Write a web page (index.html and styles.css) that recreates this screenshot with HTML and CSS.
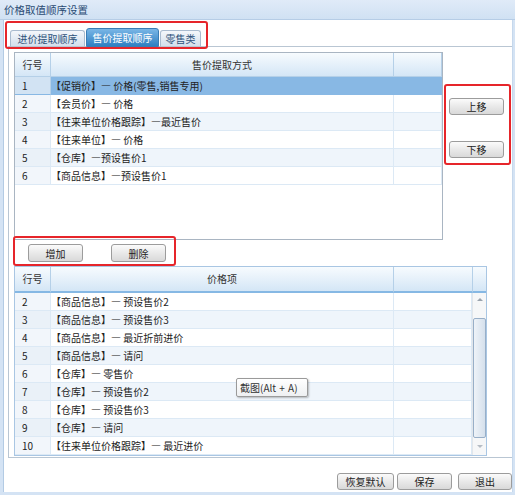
FILE: index.html
```html
<!DOCTYPE html>
<html lang="zh-CN">
<head>
<meta charset="utf-8">
<title>价格取值顺序设置</title>
<link rel="stylesheet" href="styles.css">
</head>
<body>
<div class="window">
  <div class="titlebar">价格取值顺序设置</div>
  <div class="content">
    <div class="tabs">
      <div class="tab t1">进价提取顺序</div>
      <div class="tab active">售价提取顺序</div>
      <div class="tab t3">零售类</div>
    </div>
    <div class="panel">
      <div class="upper">
        <div class="grid g1">
          <div class="hdr c3">
            <div>行号</div><div>售价提取方式</div><div></div>
          </div>
          <div class="row c3 sel"><div>1</div><div>【促销价】— 价格(零售,销售专用)</div><div></div></div>
          <div class="row c3"><div>2</div><div>【会员价】— 价格</div><div></div></div>
          <div class="row c3 alt"><div>3</div><div>【往来单位价格跟踪】—最近售价</div><div></div></div>
          <div class="row c3"><div>4</div><div>【往来单位】— 价格</div><div></div></div>
          <div class="row c3 alt"><div>5</div><div>【仓库】—预设售价1</div><div></div></div>
          <div class="row c3"><div>6</div><div>【商品信息】—预设售价1</div><div></div></div>
        </div>
        <div class="side">
          <button class="btn bside">上移</button>
          <button class="btn bside">下移</button>
        </div>
      </div>
      <div class="addrow">
        <button class="btn badd">增加</button>
        <button class="btn badd">删除</button>
      </div>
      <div class="grid g2">
        <div class="hdr c4">
          <div>行号</div><div>价格项</div><div></div><div></div>
        </div>
        <div class="gbody">
          <div class="rows">
            <div class="row c3l"><div>2</div><div>【商品信息】— 预设售价2</div><div></div></div>
            <div class="row c3l alt"><div>3</div><div>【商品信息】— 预设售价3</div><div></div></div>
            <div class="row c3l"><div>4</div><div>【商品信息】— 最近折前进价</div><div></div></div>
            <div class="row c3l alt"><div>5</div><div>【商品信息】— 请问</div><div></div></div>
            <div class="row c3l"><div>6</div><div>【仓库】— 零售价</div><div></div></div>
            <div class="row c3l alt"><div>7</div><div>【仓库】— 预设售价2</div><div></div></div>
            <div class="row c3l"><div>8</div><div>【仓库】— 预设售价3</div><div></div></div>
            <div class="row c3l alt"><div>9</div><div>【仓库】— 请问</div><div></div></div>
            <div class="row c3l"><div>10</div><div>【往来单位价格跟踪】— 最近进价</div><div></div></div>
          </div>
          <div class="sb">
            <div class="arr"><span class="up"></span></div>
            <div class="thumb"></div>
            <div class="arr down-area"><span class="down"></span></div>
          </div>
        </div>
      </div>
    </div>
    <div class="bottom">
      <button class="btn bb1">恢复默认</button>
      <button class="btn bb2">保存</button>
      <button class="btn bb3">退出</button>
    </div>
  </div>
  <div class="tooltip">截图(Alt + A)</div>
  <div class="mark m1"></div>
  <div class="mark m2"></div>
  <div class="mark m3"></div>
</div>
</body>
</html>
```
FILE: styles.css
```css
* { box-sizing: border-box; }
html, body { margin: 0; padding: 0; }
body {
  font-family: "Noto Sans CJK SC", "Noto Sans", sans-serif;
  font-size: 10px;
  color: #222;
  background: #d4e3f4;
}
.window {
  position: relative;
  width: 515px;
  height: 495px;
  overflow: hidden;
  display: flex;
  flex-direction: column;
  background: #d4e3f4;
}
.titlebar {
  height: 20px;
  line-height: 19px;
  padding-left: 4px;
  font-size: 10.5px;
  color: #2a4b73;
  background: linear-gradient(#e0ebf8, #d0e1f3);
  border-bottom: 1px solid #b6cde6;
}
.content {
  flex: 1;
  margin: 0 2px 3px 3px;
  background: #fff;
  border-left: 1px solid #b3cbe4;
  border-right: 1px solid #c6d8ec;
  display: flex;
  flex-direction: column;
}
.tabs {
  display: flex;
  align-items: flex-end;
  margin-top: 8px;
  padding-left: 6px;
  height: 19px;
  margin-bottom: -1px;
  position: relative;
  z-index: 1;
}
.tab {
  height: 17px;
  line-height: 16px;
  padding: 0;
  text-align: center;
  margin-right: 1px;
  color: #2d527a;
  background: linear-gradient(#f4f7fb, #d3dfec);
  border: 1px solid #a9bbcf;
  border-bottom-color: #b9c6d3;
  border-radius: 3px 3px 0 0;
  white-space: nowrap;
}
.t1 { width: 75px; }
.t3 { width: 41px; }
.tab.active {
  height: 19px;
  line-height: 18px;
  width: 73px;
  color: #fff;
  background: linear-gradient(#79b6e6, #2f80c2);
  border-color: #3a7db5;
}
.panel {
  margin-left: 4px;
  height: 412px;
  border: 1px solid #b9c6d3;
  border-right: none;
  padding: 5px 0 0 5px;
}
.upper { display: flex; }
.grid { background: #fff; }
.g1 {
  width: 429px;
  height: 188px;
  border: 1px solid #a9b5c2;
}
.hdr {
  display: grid;
  height: 24px;
}
.hdr > div {
  background: linear-gradient(#f7fbfe, #d4e6f6);
  border-right: 1px solid #b5d0e8;
  border-bottom: 1px solid #b5d0e8;
  text-align: center;
  line-height: 23px;
  color: #333;
}
.c3 { grid-template-columns: 36px 343px 1fr; }
.c4 { grid-template-columns: 36px 343px 79px 1fr; }
.c3l { grid-template-columns: 36px 343px 1fr; }
.row {
  display: grid;
  height: 18px;
}
.row > div {
  border-right: 1px solid #dce9f5;
  border-bottom: 1px solid #dce9f5;
  line-height: 17px;
  white-space: nowrap;
  overflow: hidden;
}
.row > div:first-child {
  padding-left: 7px;
  background: #f2f6fb;
}
.row > div:nth-child(2) { padding-left: 0; }
.row.alt > div { background: #eff5fb; }
.row.alt > div:first-child { background: #eaf1f8; }
.row.sel > div { background: #88b8e4; border-color: #88b8e4; }
.row.sel > div:first-child { background: #d2e3f3; border-right-color: #b5d0e8; }
.side {
  margin-left: 6px;
  padding-top: 46px;
  display: flex;
  flex-direction: column;
  gap: 26px;
}
.btn {
  font-family: inherit;
  font-size: 10px;
  color: #222;
  height: 17px;
  padding: 0;
  line-height: 15px;
  background: linear-gradient(#fbfbfb, #e9e9e9 50%, #d9d9d9);
  border: 1px solid #9c9c9c;
  border-radius: 3px;
}
.bside { width: 55px; }
.addrow {
  display: flex;
  gap: 28px;
  margin-top: 4px;
  padding-left: 14px;
}
.badd { width: 55px; height: 18px; }
.g2 {
  margin-top: 4px;
  width: 473px;
  height: 190px;
  border: 1px solid #a9c6e3;
  display: flex;
  flex-direction: column;
}
.g2 .hdr { height: 26px; }
.g2 .hdr > div {
  border-bottom: 2px solid #86b8e4;
  line-height: 24px;
}
.g2 .hdr > div:last-child { border-right: none; }
.gbody {
  flex: 1;
  display: flex;
}
.rows { flex: 1; }
.sb {
  width: 14px;
  background: #f6f7f8;
  border-left: 1px solid #e2e6ea;
  display: flex;
  flex-direction: column;
  align-items: center;
}
.arr {
  height: 13px;
  width: 100%;
  display: flex;
  align-items: center;
  justify-content: center;
}
.down-area { flex: 1; height: auto; }
.up, .down {
  width: 0;
  height: 0;
  border-left: 3px solid transparent;
  border-right: 3px solid transparent;
}
.up { border-bottom: 3px solid #9aa3ad; }
.down { border-top: 3px solid #b5bcc4; }
.thumb {
  margin-top: 12px;
  width: 13px;
  height: 120px;
  border: 1px solid #98afc8;
  border-radius: 2px;
  background: linear-gradient(to right, #eef3f8, #d5e0ec);
}
.bottom {
  display: flex;
  justify-content: flex-end;
  margin-top: 15px;
  gap: 3px;
}
.bb1 { width: 57px; }
.bb2 { width: 55px; margin-right: 3px; }
.bb3 { width: 54px; }
.tooltip {
  position: absolute;
  left: 236px;
  top: 378px;
  width: 72px;
  height: 19px;
  line-height: 17px;
  padding: 0 3px;
  font-size: 10px;
  color: #333;
  background: linear-gradient(#ffffff, #eef0f2);
  border: 1px solid #9a9a9a;
  border-radius: 2px;
  box-shadow: 1px 1px 2px rgba(0,0,0,0.25);
  white-space: nowrap;
  word-spacing: 1px;
}
.mark {
  position: absolute;
  border: 2.5px solid #e6252a;
  border-radius: 3px;
}
.m1 { left: 5px; top: 21px; width: 203px; height: 28px; }
.m2 { left: 444px; top: 84px; width: 67px; height: 81px; }
.m3 { left: 13px; top: 236px; width: 163px; height: 30px; }
```
